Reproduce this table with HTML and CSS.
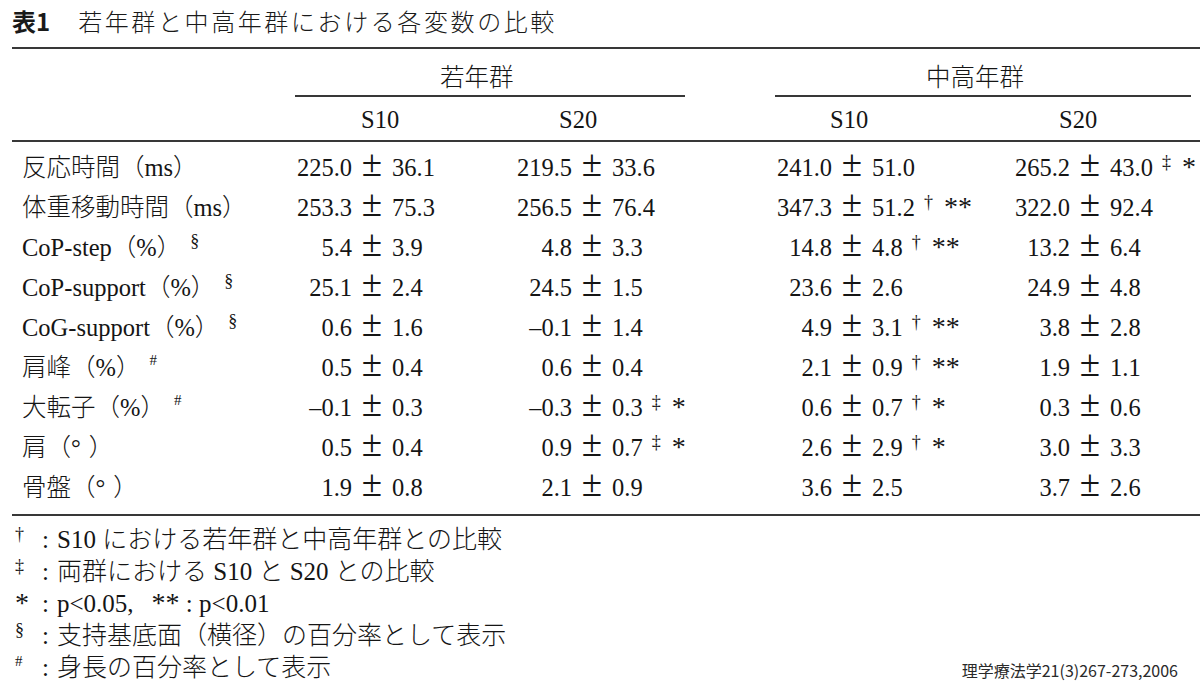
FILE: index.html
```html
<!DOCTYPE html>
<html lang="ja">
<head>
<meta charset="utf-8">
<title>表1 若年群と中高年群における各変数の比較</title>
<link rel="stylesheet" href="styles.css">
</head>
<body>
<main class="page">
  <h1 class="title"><span class="tno">表1</span>若年群と中高年群における各変数の比較</h1>

  <section class="tbl">
    <div class="head">
      <div class="sp"></div>
      <div class="grp g1">若年群</div>
      <div class="grp g2">中高年群</div>

      <div class="sh"></div>
      <div class="sh s1">S10</div>
      <div class="sh s2">S20</div>
      <div class="sh s3">S10</div>
      <div class="sh s4">S20</div>
    </div>

    <div class="body">
      <div class="lab">反応時間（ms）</div>
      <div class="v"><span class="l">225.0</span><span class="pm">±</span><span class="r">36.1</span></div>
      <div class="v"><span class="l">219.5</span><span class="pm">±</span><span class="r">33.6</span></div>
      <div class="v"><span class="l">241.0</span><span class="pm">±</span><span class="r">51.0</span></div>
      <div class="v"><span class="l">265.2</span><span class="pm">±</span><span class="r">43.0<sup class="mk">‡</sup><span class="ast">*</span></span></div>

      <div class="lab">体重移動時間（ms）</div>
      <div class="v"><span class="l">253.3</span><span class="pm">±</span><span class="r">75.3</span></div>
      <div class="v"><span class="l">256.5</span><span class="pm">±</span><span class="r">76.4</span></div>
      <div class="v"><span class="l">347.3</span><span class="pm">±</span><span class="r">51.2<sup class="mk">†</sup><span class="ast">**</span></span></div>
      <div class="v"><span class="l">322.0</span><span class="pm">±</span><span class="r">92.4</span></div>

      <div class="lab">CoP-step（%）<sup class="lm">§</sup></div>
      <div class="v"><span class="l">5.4</span><span class="pm">±</span><span class="r">3.9</span></div>
      <div class="v"><span class="l">4.8</span><span class="pm">±</span><span class="r">3.3</span></div>
      <div class="v"><span class="l">14.8</span><span class="pm">±</span><span class="r">4.8<sup class="mk">†</sup><span class="ast">**</span></span></div>
      <div class="v"><span class="l">13.2</span><span class="pm">±</span><span class="r">6.4</span></div>

      <div class="lab">CoP-support（%）<sup class="lm">§</sup></div>
      <div class="v"><span class="l">25.1</span><span class="pm">±</span><span class="r">2.4</span></div>
      <div class="v"><span class="l">24.5</span><span class="pm">±</span><span class="r">1.5</span></div>
      <div class="v"><span class="l">23.6</span><span class="pm">±</span><span class="r">2.6</span></div>
      <div class="v"><span class="l">24.9</span><span class="pm">±</span><span class="r">4.8</span></div>

      <div class="lab">CoG-support（%）<sup class="lm">§</sup></div>
      <div class="v"><span class="l">0.6</span><span class="pm">±</span><span class="r">1.6</span></div>
      <div class="v"><span class="l">–0.1</span><span class="pm">±</span><span class="r">1.4</span></div>
      <div class="v"><span class="l">4.9</span><span class="pm">±</span><span class="r">3.1<sup class="mk">†</sup><span class="ast">**</span></span></div>
      <div class="v"><span class="l">3.8</span><span class="pm">±</span><span class="r">2.8</span></div>

      <div class="lab">肩峰（%）<sup class="lm hash">#</sup></div>
      <div class="v"><span class="l">0.5</span><span class="pm">±</span><span class="r">0.4</span></div>
      <div class="v"><span class="l">0.6</span><span class="pm">±</span><span class="r">0.4</span></div>
      <div class="v"><span class="l">2.1</span><span class="pm">±</span><span class="r">0.9<sup class="mk">†</sup><span class="ast">**</span></span></div>
      <div class="v"><span class="l">1.9</span><span class="pm">±</span><span class="r">1.1</span></div>

      <div class="lab">大転子（%）<sup class="lm hash">#</sup></div>
      <div class="v"><span class="l">–0.1</span><span class="pm">±</span><span class="r">0.3</span></div>
      <div class="v"><span class="l">–0.3</span><span class="pm">±</span><span class="r">0.3<sup class="mk">‡</sup><span class="ast">*</span></span></div>
      <div class="v"><span class="l">0.6</span><span class="pm">±</span><span class="r">0.7<sup class="mk">†</sup><span class="ast">*</span></span></div>
      <div class="v"><span class="l">0.3</span><span class="pm">±</span><span class="r">0.6</span></div>

      <div class="lab">肩（°<span class="dg"></span>）</div>
      <div class="v"><span class="l">0.5</span><span class="pm">±</span><span class="r">0.4</span></div>
      <div class="v"><span class="l">0.9</span><span class="pm">±</span><span class="r">0.7<sup class="mk">‡</sup><span class="ast">*</span></span></div>
      <div class="v"><span class="l">2.6</span><span class="pm">±</span><span class="r">2.9<sup class="mk">†</sup><span class="ast">*</span></span></div>
      <div class="v"><span class="l">3.0</span><span class="pm">±</span><span class="r">3.3</span></div>

      <div class="lab">骨盤（°<span class="dg"></span>）</div>
      <div class="v"><span class="l">1.9</span><span class="pm">±</span><span class="r">0.8</span></div>
      <div class="v"><span class="l">2.1</span><span class="pm">±</span><span class="r">0.9</span></div>
      <div class="v"><span class="l">3.6</span><span class="pm">±</span><span class="r">2.5</span></div>
      <div class="v"><span class="l">3.7</span><span class="pm">±</span><span class="r">2.6</span></div>
    </div>
  </section>

  <footer class="notes">
    <div class="fnlist">
      <div class="fn"><span class="fm"><sup class="fs">†</sup></span><span class="fc">:</span><span class="ft">S10 における若年群と中高年群との比較</span></div>
      <div class="fn"><span class="fm"><sup class="fs">‡</sup></span><span class="fc">:</span><span class="ft">両群における S10 と S20 との比較</span></div>
      <div class="fn"><span class="fm"><span class="fa">*</span></span><span class="fc">:</span><span class="ft">p&lt;0.05,<span class="gap"></span><span class="fa">**</span> : p&lt;0.01</span></div>
      <div class="fn"><span class="fm"><sup class="fs">§</sup></span><span class="fc">:</span><span class="ft">支持基底面（横径）の百分率として表示</span></div>
      <div class="fn"><span class="fm"><sup class="fs hs">#</sup></span><span class="fc">:</span><span class="ft">身長の百分率として表示</span></div>
    </div>
    <div class="cite">理学療法学21(3)267-273,2006</div>
  </footer>
</main>
</body>
</html>
```

FILE: styles.css
```css
* {
  box-sizing: border-box;
}

html, body {
  margin: 0;
  padding: 0;
  background: #ffffff;
}

body {
  color: #151515;
  font-family: "Liberation Serif", "Noto Sans CJK JP", serif;
  font-size: 24.5px;
  font-weight: 300;
}

.page {
  width: 1200px;
  height: 693px;
  padding-left: 12px;
  overflow: hidden;
}

/* ---------- title ---------- */
.title {
  margin: 0;
  height: 47px;
  padding-bottom: 5px;
  font-family: "Noto Sans CJK JP", sans-serif;
  font-size: 24px;
  font-weight: 300;
  line-height: 42px;
  letter-spacing: 2.6px;
  color: #1a1a1a;
  white-space: nowrap;
}

.tno {
  font-weight: 700;
  letter-spacing: 0;
  margin-right: 28px;
}

/* ---------- table ---------- */
.tbl {
  border-top: 2px solid #383838;
  border-bottom: 2px solid #383838;
}

.head,
.body {
  display: grid;
  grid-template-columns: 270px 220px 260px 238px 1fr;
}

.body {
  padding: 6px 0;
  grid-auto-rows: 40px;
}

.grp {
  padding-top: 11px;
  line-height: 35px;
  border-bottom: 2px solid #383838;
  white-space: nowrap;
}

.g1 {
  grid-column: 2 / 4;
  margin-left: 13px;
  margin-right: 77px;
  padding-left: 145px;
}

.g2 {
  grid-column: 4 / 6;
  margin-left: 13px;
  margin-right: 9px;
  padding-left: 151px;
}

.sh {
  padding-top: 3px;
  line-height: 40px;
  border-bottom: 2px solid #383838;
}

.s1 { padding-left: 79px; }
.s2 { padding-left: 57px; }
.s3 { padding-left: 68px; }
.s4 { padding-left: 59px; }

.lab {
  padding-left: 10px;
  line-height: 40px;
  white-space: nowrap;
}

.dg {
  display: inline-block;
  width: 8px;
}

.lm {
  font-size: 18px;
  line-height: 1;
  vertical-align: 9px;
  margin-left: 9px;
}

.lm.hash {
  font-size: 15px;
  vertical-align: 11px;
}

.v {
  display: flex;
  align-items: baseline;
  line-height: 40px;
  white-space: nowrap;
}

.l {
  width: 70px;
  text-align: right;
}

.pm {
  width: 40px;
  text-align: center;
  font-size: 37px;
  line-height: 30px;
}

.r {
  text-align: left;
}

.mk {
  font-size: 18px;
  line-height: 1;
  vertical-align: 8px;
  margin-left: 9px;
}

.ast {
  font-size: 28px;
  line-height: 1;
  margin-left: 11px;
}

/* ---------- notes ---------- */
.notes {
  display: flex;
  justify-content: space-between;
  align-items: flex-end;
  padding-top: 8px;
  padding-right: 22px;
}

.fnlist {
  font-size: 25px;
}

.fn {
  display: flex;
  align-items: baseline;
  line-height: 32px;
  white-space: nowrap;
}

.fm {
  width: 29px;
  padding-left: 3px;
}

.fs {
  font-size: 18px;
  line-height: 1;
  vertical-align: 8px;
}

.fs.hs {
  font-size: 15px;
  vertical-align: 10px;
}

.fa {
  font-size: 28px;
  line-height: 1;
}

.fc {
  width: 16px;
  padding-left: 1px;
}

.gap {
  display: inline-block;
  width: 18px;
}

.cite {
  margin-bottom: 4px;
  font-family: "Noto Sans CJK JP", sans-serif;
  font-size: 16px;
  font-weight: 400;
  line-height: 20px;
  color: #2a2a2a;
  white-space: nowrap;
}
```
